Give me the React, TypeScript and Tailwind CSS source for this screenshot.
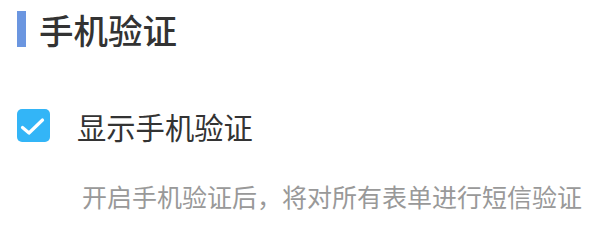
import React from "react";

export default function App() {
  return (
    <div
      className="w-[597px] h-[225px] bg-white pl-[17px] pt-[11px]"
      style={{ fontFamily: '"Noto Sans CJK SC", "Noto Sans", sans-serif' }}
    >
      <div className="flex items-center h-[36px]">
        <div className="w-[9px] h-[36px] bg-[#6b96e0]" />
        <div className="ml-[13px] text-[34.5px] leading-[36px] text-[#333333] font-medium">手机验证</div>
      </div>
      <div className="flex items-center mt-[62px] h-[33px]">
        <div className="w-[33px] h-[33px] rounded-[5px] bg-[#33b5f7]">
          <svg width="33" height="33" viewBox="0 0 33 33" fill="none">
            <path d="M5.5 18.5 L12 24 L25.5 11" stroke="white" strokeWidth="3.2" strokeLinecap="round" strokeLinejoin="round" />
          </svg>
        </div>
        <div className="ml-[27px] text-[29.3px] leading-[34px] text-[#333333]">显示手机验证</div>
      </div>
      <div className="mt-[39px] ml-[65px] text-[25px] leading-[30px] text-[#999999]">
        开启手机验证后，将对所有表单进行短信验证
      </div>
    </div>
  );
}
